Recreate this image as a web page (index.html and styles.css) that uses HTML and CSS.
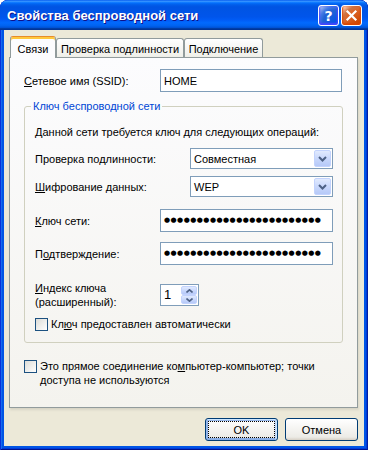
FILE: index.html
```html
<!DOCTYPE html>
<html lang="ru">
<head>
<meta charset="utf-8">
<title>Свойства беспроводной сети</title>
<link rel="stylesheet" href="styles.css">
</head>
<body>
<div class="window">
  <div class="titlebar">
    <div class="title">Свойства беспроводной сети</div>
    <div class="controls">
      <span class="ctl help">?</span>
      <span class="ctl close"><svg width="13" height="13" viewBox="0 0 13 13"><path d="M2.5 2.5 L10.5 10.5 M10.5 2.5 L2.5 10.5" stroke="#fff" stroke-width="2.2" stroke-linecap="square"/></svg></span>
    </div>
  </div>
  <div class="client">
    <div class="tabs">
      <div class="tab active t1">Связи</div>
      <div class="tab t2">Проверка подлинности</div>
      <div class="tab t3">Подключение</div>
    </div>
    <div class="panel">
      <div class="row h23">
        <span class="lbl w136"><u>С</u>етевое имя (SSID):</span>
        <div class="edit ssid">HOME</div>
      </div>
      <fieldset class="group">
        <legend>Ключ беспроводной сети</legend>
        <div class="note">Данной сети требуется ключ для следующих операций:</div>
        <div class="row h21 mt9">
          <span class="lbl w155">Проверка по<u>д</u>линности:</span>
          <div class="combo"><span class="ctext">Совместная</span><span class="arrow"><svg width="9" height="6" viewBox="0 0 9 6"><path d="M1 1 L4.5 4.5 L8 1" fill="none" stroke="#4d6185" stroke-width="2"/></svg></span></div>
        </div>
        <div class="row h21 mt7">
          <span class="lbl w155"><u>Ш</u>ифрование данных:</span>
          <div class="combo"><span class="ctext">WEP</span><span class="arrow"><svg width="9" height="6" viewBox="0 0 9 6"><path d="M1 1 L4.5 4.5 L8 1" fill="none" stroke="#4d6185" stroke-width="2"/></svg></span></div>
        </div>
        <div class="row h23 mt12">
          <span class="lbl w125"><u>К</u>люч сети:</span>
          <div class="edit key"><span class="dots">●●●●●●●●●●●●●●●●●●●●●●●●</span></div>
        </div>
        <div class="row h23 mt10">
          <span class="lbl w125">П<u>о</u>дтверждение:</span>
          <div class="edit key"><span class="dots">●●●●●●●●●●●●●●●●●●●●●●●●</span></div>
        </div>
        <div class="row h22 mt19">
          <span class="lbl w125 two"><u>И</u>ндекс ключа<br>(расширенный):</span>
          <div class="edit spin"><span class="stext">1</span>
            <span class="spinbtns">
              <span class="sbtn up"><svg width="7" height="4" viewBox="0 0 7 4"><path d="M0.5 3.5 L3.5 0.8 L6.5 3.5" fill="none" stroke="#4d6185" stroke-width="1.6"/></svg></span>
              <span class="sbtn down"><svg width="7" height="4" viewBox="0 0 7 4"><path d="M0.5 0.5 L3.5 3.2 L6.5 0.5" fill="none" stroke="#4d6185" stroke-width="1.6"/></svg></span>
            </span>
          </div>
        </div>
        <div class="check mt12">
          <span class="box"></span>
          <span class="chk-text">Кл<u>ю</u>ч предоставлен автоматически</span>
        </div>
      </fieldset>
      <div class="check adhoc">
        <span class="box"></span>
        <span class="chk-text">Это прямое соединение ко<u>м</u>пьютер-компьютер; точки<br>доступа не используются</span>
      </div>
    </div>
    <div class="buttons">
      <button class="btn default">OK</button>
      <button class="btn">Отмена</button>
    </div>
  </div>
</div>
</body>
</html>
```
FILE: styles.css
```css
* { box-sizing: border-box; }
html, body { margin: 0; padding: 0; background: #fff; }
body {
  font-family: "Liberation Sans", Arial, sans-serif;
  font-size: 11px;
  color: #000;
}
u { text-decoration: underline; text-underline-offset: 1px; }

.window {
  width: 368px;
  height: 450px;
  display: flex;
  flex-direction: column;
  background: #0055e5;
  border-radius: 8px 8px 0 0;
  overflow: hidden;
  box-shadow: inset 1px 0 #0831d9, inset -1px 0 #001ea0, inset 0 -1px #00138c, inset 2px 0 #166aee, inset -2px 0 #003bda, inset 0 -2px #003bda;
}

.titlebar {
  height: 30px;
  flex: none;
  display: flex;
  justify-content: space-between;
  align-items: flex-start;
  padding: 5px 6px 0 7px;
  background: linear-gradient(180deg, #0058ee 0%, #3a93ff 4%, #288eff 6%, #127dff 8%, #036ffc 10%, #0262ee 14%, #0057e5 20%, #0054e3 24%, #0055eb 56%, #005bf5 66%, #026afe 76%, #0062ef 86%, #0052d6 92%, #0040ab 94%, #003092 100%);
  border-radius: 8px 8px 0 0;
}
.title {
  color: #fff;
  font-weight: bold;
  font-size: 13px;
  line-height: 21px;
  text-shadow: 1px 1px #0f1089;
}
.controls { display: flex; gap: 2px; }
.ctl {
  width: 21px;
  height: 21px;
  border: 1px solid #fff;
  border-radius: 3px;
  display: flex;
  align-items: center;
  justify-content: center;
}
.help {
  background: radial-gradient(circle at 90% 90%, #0054e9 0, #2263d5 55%, #4479e4 70%, #a3bbec 90%, #fff 100%);
  box-shadow: inset 0 -1px 2px 1px #4646ff;
  color: #fff;
  font-family: "DejaVu Sans", sans-serif;
  font-weight: bold;
  font-size: 14px;
  line-height: 1;
}
.close {
  background: radial-gradient(circle at 90% 90%, #cc4600 0, #dc6527 55%, #cd7546 70%, #ffccb2 90%, #fff 100%);
  box-shadow: inset 0 -1px 2px 1px #da4600;
}

.client {
  flex: 1;
  margin: 0 4px 4px;
  background: #ece9d8;
  padding: 6px 6px 0 5px;
}

.tabs {
  display: flex;
  align-items: flex-end;
  height: 21px;
  padding-left: 1px;
  position: relative;
  z-index: 1;
}
.tab {
  height: 19px;
  border: 1px solid #919b9c;
  border-bottom: none;
  border-radius: 3px 3px 0 0;
  background: linear-gradient(180deg, #fff, #fafaf9 26%, #f0f0ea 95%, #ecebe5);
  display: flex;
  align-items: center;
  justify-content: center;
  padding-top: 1px;
}
.tab.active {
  height: 22px;
  margin-bottom: -1px;
  background: #fcfcfe;
  border-top: 1px solid #e68b2c;
  box-shadow: inset 0 2px #ffc83c;
  padding-top: 3px;
}
.t1 { width: 46px; }
.t2 { width: 128px; }
.t3 { width: 79px; }

.panel {
  height: 351px;
  border: 1px solid #919b9c;
  background: linear-gradient(180deg, #fcfcfe, #f4f3ee);
  padding: 11px 0 0 14px;
  box-shadow: 1px 2px 2px 0 rgba(208, 206, 191, .75);
}

.row { display: flex; align-items: center; }
.h21 { height: 21px; }
.h22 { height: 22px; }
.h23 { height: 23px; }
.mt7 { margin-top: 7px; }
.mt9 { margin-top: 9px; }
.mt10 { margin-top: 10px; }
.mt12 { margin-top: 12px; }
.mt19 { margin-top: 19px; }
.lbl { flex: none; line-height: 14px; }
.w125 { width: 125px; }
.w136 { width: 136px; }
.w155 { width: 155px; }

.edit {
  border: 1px solid #7f9db9;
  background: #fff;
  height: 100%;
  display: flex;
  align-items: center;
  padding-left: 3px;
  overflow: hidden;
}
.ssid { width: 182px; }
.key { width: 173px; }
.dots {
  font-family: "DejaVu Sans", sans-serif;
  font-size: 7px;
  letter-spacing: 0.45px;
  line-height: 1;
  white-space: nowrap;
}

.group {
  width: 319px;
  margin: 7px 0 0;
  padding: 13px 8px 11px 10px;
  border: 1px solid #d0d0bf;
  border-radius: 3px;
  min-width: 0;
}
.group legend {
  color: #0046d5;
  padding: 0 2px;
  margin-left: -4px;
  line-height: 14px;
}
.note { height: 13px; line-height: 13px; }

.combo {
  width: 143px;
  height: 21px;
  border: 1px solid #7f9db9;
  background: #fff;
  display: flex;
  align-items: center;
  justify-content: space-between;
  padding: 1px 1px 1px 3px;
}
.arrow, .sbtn {
  display: flex;
  align-items: center;
  justify-content: center;
  border: 1px solid #c3d3fd;
  border-radius: 2px;
  background: linear-gradient(180deg, #e1eafe, #c9d8fc 50%, #b6c9f8);
}
.arrow { width: 17px; height: 100%; }

.spin {
  width: 39px;
  justify-content: space-between;
  padding: 1px 1px 1px 3px;
  font-size: 13px;
}
.stext { line-height: 18px; }
.spinbtns { display: flex; flex-direction: column; height: 100%; width: 16px; }
.sbtn { flex: 1; }

.check { display: flex; align-items: flex-start; }
.box {
  flex: none;
  width: 13px;
  height: 13px;
  border: 1px solid #1c5180;
  background: linear-gradient(135deg, #dcdcd7, #fff);
  margin-right: 3px;
}
.chk-text { line-height: 13px; }
.adhoc { margin-top: 16px; }
.adhoc .box { margin-top: 1px; }
.adhoc .chk-text { line-height: 14px; }

.buttons {
  display: flex;
  justify-content: flex-end;
  gap: 7px;
  margin-top: 10px;
}
.btn {
  width: 73px;
  height: 23px;
  font-family: inherit;
  font-size: 11px;
  color: #000;
  border: 1px solid #003c74;
  border-radius: 3px;
  background: linear-gradient(180deg, #fff, #ecebe6 86%, #d6d0c5);
  padding: 0;
}
.btn.default {
  box-shadow: inset -1px 1px #cee7ff, inset 1px 2px #98b8ea, inset -2px 2px #bcd4f6, inset 1px -1px #89ade4, inset 2px -2px #89ade4;
  outline: 1px dotted #000;
  outline-offset: -4px;
}
```
